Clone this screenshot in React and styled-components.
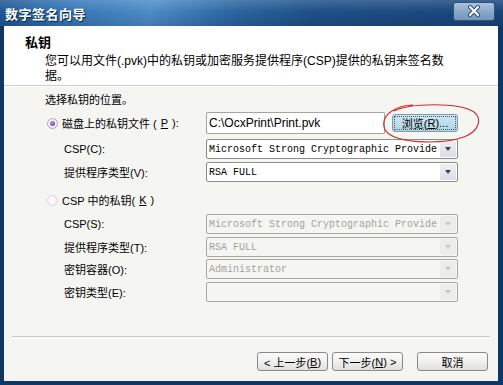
import React from "react";
import styled, { createGlobalStyle } from "styled-components";

const GlobalStyle = createGlobalStyle`
  html, body { margin: 0; padding: 0; background: #fff; }
  body {
    font-family: "Liberation Sans", "Noto Sans CJK SC", sans-serif;
    font-size: 11px;
    color: #000;
  }
`;

const Window = styled.div`
  position: relative;
  width: 503px;
  height: 385px;
  display: flex;
  flex-direction: column;
  background: #0f3766;
  overflow: hidden;
`;

const TitleBar = styled.div`
  height: 26px;
  flex: none;
  display: flex;
  align-items: center;
  justify-content: space-between;
  padding: 0 8px 0 5px;
  background:
    linear-gradient(180deg, rgba(255, 255, 255, 0.16) 0%, rgba(255, 255, 255, 0) 45%, rgba(0, 0, 0, 0.12) 100%),
    linear-gradient(105deg, #1f5690 0%, #3576b6 14%, #4d8cc7 30%, #2c66a2 46%, #1e5088 62%, #1a4479 100%);
`;

const TitleText = styled.span`
  color: #fff;
  font-size: 13px;
  font-weight: bold;
  letter-spacing: 0.5px;
  text-shadow: 1px 1px 1px #0b2747;
`;

const CloseButton = styled.div`
  width: 42px;
  height: 19px;
  margin-top: -4px;
  box-sizing: border-box;
  border: 1px solid #2d5380;
  border-radius: 3px;
  background: linear-gradient(180deg, #a9c3dc 0%, #8aa9c9 50%, #7596bb 100%);
  display: flex;
  align-items: center;
  justify-content: center;
`;

const Client = styled.div`
  flex: 1;
  display: flex;
  flex-direction: column;
  margin: 0 5px 4px 4px;
  background: #f5f5f2;
`;

const Header = styled.div`
  height: 60px;
  flex: none;
  box-sizing: border-box;
  padding: 9px 0 0 21px;
  background: #fff;
  border-bottom: 1px solid #cfcfc9;
`;

const HeaderTitle = styled.div`
  font-size: 13px;
  font-weight: bold;
  line-height: 15px;
`;

const HeaderText = styled.div`
  margin: 4px 0 0 20px;
  font-size: 12px;
  line-height: 15px;
`;

const Content = styled.div`
  flex: 1;
  display: flex;
  flex-direction: column;
  padding: 0 0 0 41px;
  border-top: 1px solid #fff;
`;

const Row = styled.div`
  display: flex;
  align-items: center;
  height: ${p => p.h || 20}px;
  margin-top: ${p => p.mt || 0}px;
`;

const Label = styled.span`
  width: ${p => 161 - (p.indent || 0)}px;
  margin-left: ${p => p.indent || 0}px;
  white-space: nowrap;
`;

const RadioLabel = styled.label`
  width: 159px;
  margin-left: 2px;
  display: flex;
  align-items: center;
  gap: 4px;
  white-space: nowrap;
`;

const Radio = styled.span`
  width: 11px;
  height: 11px;
  flex: none;
  box-sizing: border-box;
  border-radius: 50%;
  border: 1px solid ${p => (p.checked ? "#b49cd0" : "#ddd2ea")};
  background: radial-gradient(circle at 40% 40%, #ffffff 0%, #efe8f6 100%);
  display: flex;
  align-items: center;
  justify-content: center;
  &::after {
    content: "";
    display: ${p => (p.checked ? "block" : "none")};
    width: 5px;
    height: 5px;
    border-radius: 50%;
    background: radial-gradient(circle at 35% 35%, #b58ae0 0%, #6d3d9e 100%);
  }
`;

const TextBox = styled.div`
  width: 179px;
  height: 22px;
  box-sizing: border-box;
  border: 1px solid #a5a5a0;
  border-radius: 1px;
  background: #fff;
  padding-left: 2px;
  display: flex;
  align-items: center;
  font-size: 12px;
`;

const Select = styled.div`
  width: 252px;
  height: 20px;
  box-sizing: border-box;
  border: 1px solid ${p => (p.disabled ? "#a9a9a4" : "#8c8c88")};
  border-radius: 2px;
  background: ${p => (p.disabled ? "#f5f5f2" : "#fff")};
  display: flex;
  align-items: center;
  font-family: "Liberation Mono", "Noto Sans CJK SC", monospace;
  font-size: 10px;
  color: ${p => (p.disabled ? "#a3a39e" : "#000")};
`;

const SelectValue = styled.span`
  flex: 1;
  padding-left: 2px;
  white-space: nowrap;
`;

const DropButton = styled.span`
  width: 16px;
  height: 16px;
  margin-right: 1px;
  flex: none;
  border-radius: 1px;
  background: ${p => (p.disabled ? "#ecece9" : "linear-gradient(180deg, #eef0f4 0%, #d9dde4 100%)")};
  display: flex;
  align-items: center;
  justify-content: center;
  &::after {
    content: "";
    border-left: 3.5px solid transparent;
    border-right: 3.5px solid transparent;
    border-top: 4px solid ${p => (p.disabled ? "#c9c9c6" : "#3a3f4a")};
  }
`;

const Button = styled.button`
  width: ${p => p.w || 71}px;
  height: 19px;
  margin-left: ${p => p.ml || 0}px;
  box-sizing: border-box;
  padding: 0;
  border: 1px solid #8b8b87;
  border-radius: 3px;
  background: linear-gradient(180deg, #fbfbfb 0%, #f0f0ee 50%, #dfdfdc 100%);
  font-family: "Liberation Sans", "Noto Sans CJK SC", sans-serif;
  font-size: 11px;
  color: #000;
  display: flex;
  align-items: center;
  justify-content: center;
  white-space: nowrap;
`;

const FocusButton = styled(Button)`
  height: 18px;
  border-color: #7b9db3;
  background: linear-gradient(180deg, #cde6f0 0%, #b0d6e4 100%);
  outline: 1px dotted #4a5a66;
  outline-offset: -3px;
`;

const Footer = styled.div`
  flex: none;
  display: flex;
  flex-direction: column;
  padding: 0 10px 10px 8px;
`;

const Separator = styled.div`
  height: 1px;
  border-top: 1px solid #cdcdc8;
  border-bottom: 1px solid #fff;
  margin-right: -2px;
`;

const ButtonRow = styled.div`
  display: flex;
  justify-content: flex-end;
  margin-top: 13px;
`;

const RedCircle = styled.svg`
  position: absolute;
  left: 380px;
  top: 102px;
  width: 102px;
  height: 44px;
  pointer-events: none;
`;

function CloseIcon() {
  return (
    <svg width="14" height="12" viewBox="0 0 14 12">
      <path d="M3 2 L11 10 M11 2 L3 10" stroke="#2b4a6e" strokeWidth="4" strokeLinecap="round" />
      <path d="M3 2 L11 10 M11 2 L3 10" stroke="#fff" strokeWidth="2.2" strokeLinecap="round" />
    </svg>
  );
}

function Combo({ value, disabled }) {
  return (
    <Select disabled={disabled}>
      <SelectValue>{value}</SelectValue>
      <DropButton disabled={disabled} />
    </Select>
  );
}

export default function App() {
  return (
    <>
      <GlobalStyle />
      <Window>
        <TitleBar>
          <TitleText>数字签名向导</TitleText>
          <CloseButton>
            <CloseIcon />
          </CloseButton>
        </TitleBar>
        <Client>
          <Header>
            <HeaderTitle>私钥</HeaderTitle>
            <HeaderText>
              您可以用文件(.pvk)中的私钥或加密服务提供程序(CSP)提供的私钥来签名数
              <br />
              据。
            </HeaderText>
          </Header>
          <Content>
            <Row mt={2}>选择私钥的位置。</Row>
            <Row h={22} mt={3}>
              <RadioLabel>
                <Radio checked />
                磁盘上的私钥文件 (<u>P</u>):
              </RadioLabel>
              <TextBox>C:\OcxPrint\Print.pvk</TextBox>
              <FocusButton w={66} ml={7}>
                浏览(<u>R</u>)...
              </FocusButton>
            </Row>
            <Row mt={5}>
              <Label indent={19}>CSP(C):</Label>
              <Combo value="Microsoft Strong Cryptographic Provide" />
            </Row>
            <Row mt={3}>
              <Label indent={19}>提供程序类型(V):</Label>
              <Combo value="RSA FULL" />
            </Row>
            <Row mt={8}>
              <RadioLabel>
                <Radio />
                CSP 中的私钥(<u>K</u>)
              </RadioLabel>
            </Row>
            <Row mt={4}>
              <Label indent={19}>CSP(S):</Label>
              <Combo disabled value="Microsoft Strong Cryptographic Provide" />
            </Row>
            <Row mt={3}>
              <Label indent={19}>提供程序类型(T):</Label>
              <Combo disabled value="RSA FULL" />
            </Row>
            <Row mt={2}>
              <Label indent={19}>密钥容器(O):</Label>
              <Combo disabled value="Administrator" />
            </Row>
            <Row mt={3}>
              <Label indent={19}>密钥类型(E):</Label>
              <Combo disabled value="" />
            </Row>
          </Content>
          <Footer>
            <Separator />
            <ButtonRow>
              <Button>&lt; 上一步(<u>B</u>)</Button>
              <Button ml={4}>下一步(<u>N</u>) &gt;</Button>
              <Button ml={14}>取消</Button>
            </ButtonRow>
          </Footer>
        </Client>
        <RedCircle viewBox="0 0 102 44">
          <path
            d="M14 9 C30 1, 78 0, 94 10 C102 16, 100 29, 84 35 C64 42, 24 42, 9 32 C1 26, 2 15, 12 9 C18 5, 26 3, 33 3"
            fill="none"
            stroke="#d42a2a"
            strokeWidth="1.1"
          />
        </RedCircle>
      </Window>
    </>
  );
}
